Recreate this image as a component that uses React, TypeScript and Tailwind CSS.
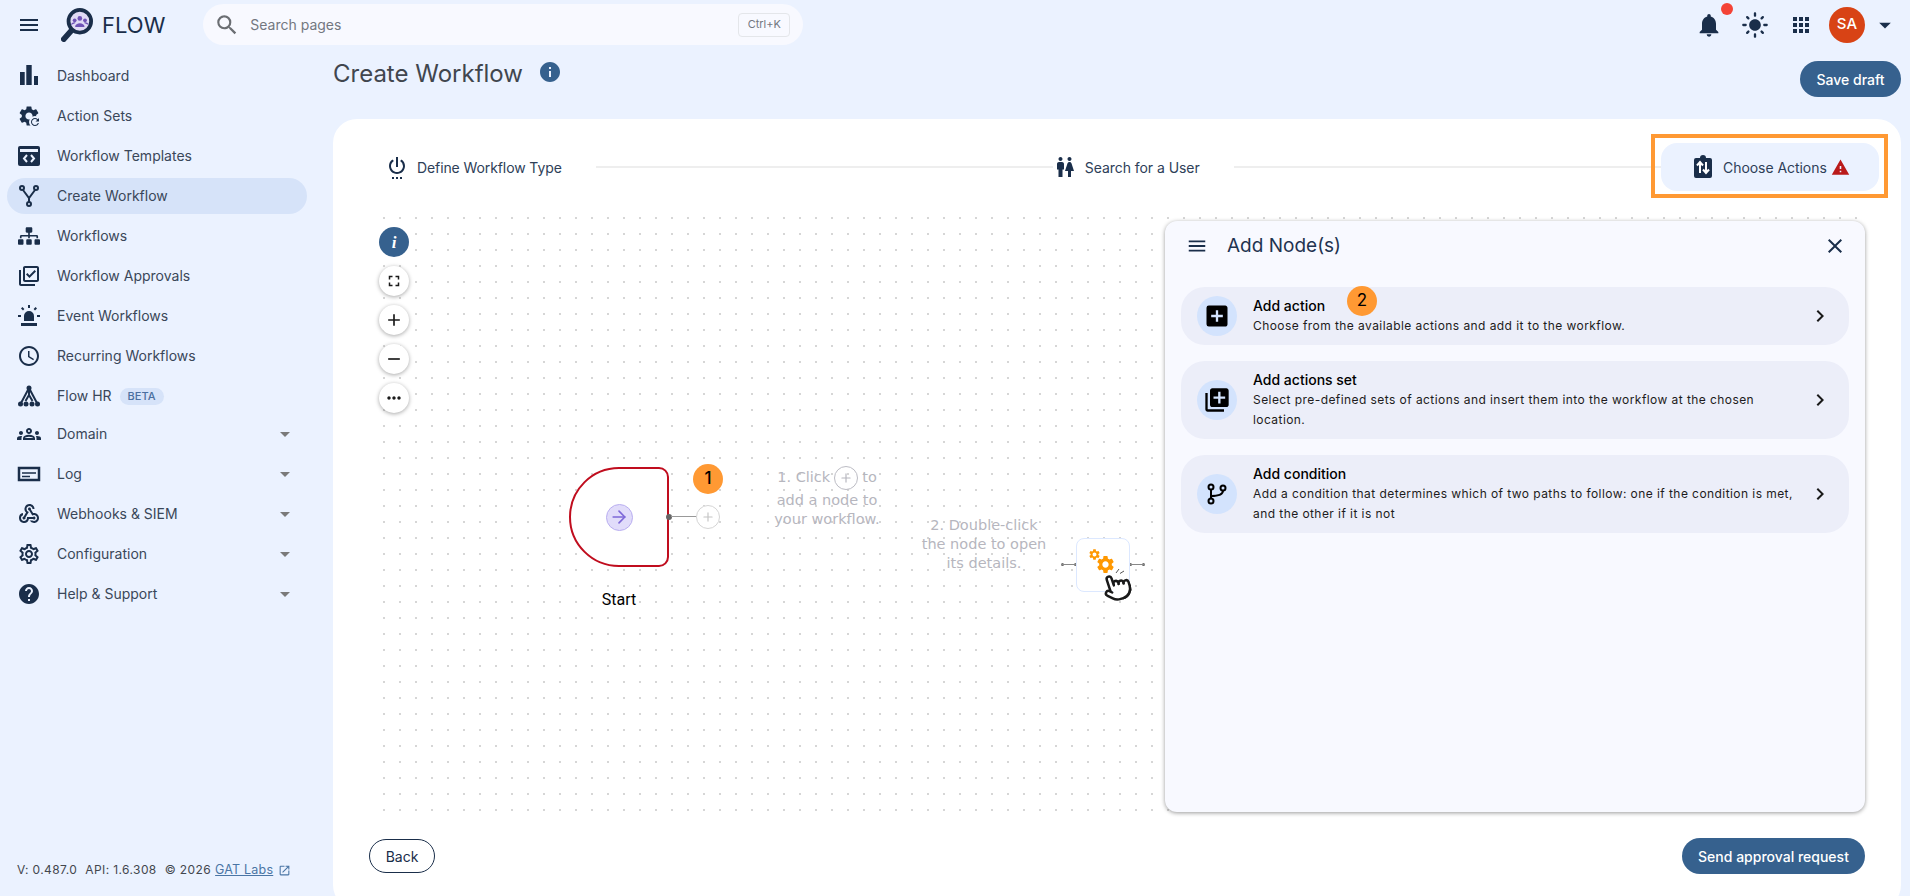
import type { ReactNode } from "react";
import { ArrowRight, Pointer, Plus } from "lucide-react";
import { FaSitemap } from "react-icons/fa";
import {
  MdAccessTime,
  MdAdd,
  MdAddBox,
  MdApps,
  MdArrowDropDown,
  MdChevronRight,
  MdClose,
  MdFullscreen,
  MdHelp,
  MdInfo,
  MdLibraryAdd,
  MdLightMode,
  MdMenu,
  MdMoreHoriz,
  MdNotifications,
  MdOpenInNew,
  MdOutlineGroups,
  MdOutlineLibraryAddCheck,
  MdOutlineSettings,
  MdOutlineWebhook,
  MdRefresh,
  MdRemove,
  MdSearch,
  MdSettings,
  MdSettingsPower,
  MdWarning,
  MdWc,
} from "react-icons/md";

function DashboardIcon() {
  return (
    <svg viewBox="0 0 24 24" className="size-6" fill="currentColor">
      <path d="M3 8h4.700v13H3zM9.300 1h5.400v20H9.300zM17 12h4v9h-4z" />
    </svg>
  );
}

function ActionSetsIcon() {
  return (
    <span className="relative block size-6">
      <MdSettings className="size-6" />
      <span className="absolute bottom-0 right-0 flex size-3 items-center justify-center rounded-full bg-[#ebf2ff]">
        <MdRefresh className="size-3" />
      </span>
    </span>
  );
}

function TemplatesIcon() {
  return (
    <svg viewBox="0 0 24 24" className="size-6">
      <rect x="1" y="2" width="22" height="20" rx="2" fill="currentColor" />
      <rect x="3" y="5" width="18" height="3" fill="#ebf2ff" />
      <path d="M10 11l-3 3.500 3 3.500M14 11l3 3.500-3 3.500" fill="none" stroke="#ebf2ff" strokeWidth="2" />
    </svg>
  );
}

function ForkIcon() {
  return (
    <svg viewBox="0 0 24 24" className="size-6" fill="none" stroke="currentColor" strokeWidth="2">
      <circle cx="5" cy="4" r="2" />
      <circle cx="19" cy="4" r="2" />
      <circle cx="12" cy="20" r="2" />
      <path d="M6 6l6 8 6-8M12 14v4" />
    </svg>
  );
}

function SirenIcon() {
  return (
    <svg viewBox="0 0 24 24" className="size-6" fill="currentColor">
      <path d="M7 17v-5a5 5 0 0 1 10 0v5zM4 19h16v3H4zM11 1h2v3h-2zM1 11h3v2H1zM20 11h3v2h-3zM4 4.500l1.400-1.400 2 2L6 6.500zM18.600 3.100L20 4.500l-2 2-1.400-1.400z" />
    </svg>
  );
}

function FlowHrIcon() {
  return (
    <svg viewBox="0 0 24 24" className="size-6" fill="none" stroke="currentColor" strokeWidth="2">
      <path d="M12 4L3.500 20M12 4l8.500 16M12 4v7M12 11l-3.500 6M12 11l3.500 6" />
      <g fill="currentColor" stroke="none">
        <circle cx="12" cy="4" r="2.500" />
        <circle cx="3.500" cy="20" r="2.500" />
        <circle cx="9" cy="20" r="2.500" />
        <circle cx="15" cy="20" r="2.500" />
        <circle cx="20.500" cy="20" r="2.500" />
      </g>
    </svg>
  );
}

function LogIcon() {
  return (
    <svg viewBox="0 0 24 24" className="size-6" fill="none" stroke="currentColor">
      <rect x="2" y="6" width="20" height="12" strokeWidth="2.500" />
      <path d="M5 11h14M5 14.500h8" strokeWidth="1.500" />
    </svg>
  );
}

function ChooseActionsIcon() {
  return (
    <svg viewBox="0 0 24 24" className="size-6">
      <path d="M5 3h4a3 3 0 0 1 6 0h4a2 2 0 0 1 2 2v16a2 2 0 0 1-2 2H5a2 2 0 0 1-2-2V5a2 2 0 0 1 2-2z" fill="currentColor" />
      <path d="M9 18V8M6 10.500L9 7l3 3.500M15 7v10M12 14.500l3 3.500 3-3.500" fill="none" stroke="#fff" strokeWidth="2" />
    </svg>
  );
}

function BranchIcon() {
  return (
    <svg viewBox="0 0 24 24" className="size-6" fill="none" stroke="#000" strokeWidth="2">
      <circle cx="6" cy="5" r="2.500" />
      <circle cx="6" cy="19" r="2.500" />
      <circle cx="18" cy="6" r="2.500" />
      <path d="M6 7.500v9M6 14c7 0 12-1 12-5.500" />
    </svg>
  );
}

function Logo() {
  return (
    <svg viewBox="0 0 34 36" className="h-[34px] w-[32px]">
      <circle cx="20" cy="14" r="12" fill="#e0daf5" stroke="#1a2e4a" strokeWidth="4" />
      <path d="M11 24L3 33" stroke="#1a2e4a" strokeWidth="6" strokeLinecap="round" />
      <circle cx="20" cy="11" r="2.500" fill="#6f52b5" />
      <circle cx="14.500" cy="13" r="2" fill="#6f52b5" />
      <circle cx="25.500" cy="13" r="2" fill="#6f52b5" />
      <path d="M15 20c0-5 10-5 10 0zM10.500 18c0-3 5-4 5-2zM29.500 18c0-3-5-4-5-2z" fill="#6f52b5" />
    </svg>
  );
}

type NavItem = { label: string; icon: ReactNode; active?: boolean; beta?: boolean; caret?: boolean };

const mainNav: NavItem[] = [
  { label: "Dashboard", icon: <DashboardIcon /> },
  { label: "Action Sets", icon: <ActionSetsIcon /> },
  { label: "Workflow Templates", icon: <TemplatesIcon /> },
  { label: "Create Workflow", icon: <ForkIcon />, active: true },
  { label: "Workflows", icon: <FaSitemap className="size-[22px]" /> },
  { label: "Workflow Approvals", icon: <MdOutlineLibraryAddCheck className="size-6" /> },
  { label: "Event Workflows", icon: <SirenIcon /> },
  { label: "Recurring Workflows", icon: <MdAccessTime className="size-[26px]" /> },
  { label: "Flow HR", icon: <FlowHrIcon />, beta: true },
];

const groupNav: NavItem[] = [
  { label: "Domain", icon: <MdOutlineGroups className="size-7" />, caret: true },
  { label: "Log", icon: <LogIcon />, caret: true },
  { label: "Webhooks & SIEM", icon: <MdOutlineWebhook className="size-6" />, caret: true },
  { label: "Configuration", icon: <MdOutlineSettings className="size-[26px]" />, caret: true },
  { label: "Help & Support", icon: <MdHelp className="size-[26px]" />, caret: true },
];

function NavRow({ item }: { item: NavItem }) {
  return (
    <div
      className={`mx-[7px] flex h-9 w-[300px] items-center rounded-[18px] pl-[10px] text-[14px] leading-5 text-[#3a4759] ${
        item.active ? "bg-[#d6e3f9]" : ""
      }`}
    >
      <span className="flex w-6 flex-none items-center justify-center text-[#1a2e4a]">{item.icon}</span>
      <span className="ml-[16px]">{item.label}</span>
      {item.beta && (
        <span className="ml-2 rounded-full bg-[#d6e3f9] px-2 text-[11px] font-medium leading-[17px] text-[#4a6fa0]">
          BETA
        </span>
      )}
      {item.caret && <MdArrowDropDown className="ml-auto mr-[10px] size-6 text-[#7a7a7a]" />}
    </div>
  );
}

function Sidebar() {
  return (
    <aside className="flex w-[333px] flex-none flex-col">
      <div className="mt-[9px] flex flex-col gap-1">
        {mainNav.map((item) => (
          <NavRow key={item.label} item={item} />
        ))}
      </div>
      <div className="mt-[2px] flex flex-col gap-1">
        {groupNav.map((item) => (
          <NavRow key={item.label} item={item} />
        ))}
      </div>
      <div className="mt-auto mb-[18px] flex items-center pl-[17px] text-[12px] leading-4 tracking-[0.4px] text-[#43474e]">
        <span>V: 0.487.0</span>
        <span className="ml-[8px]">API: 1.6.308</span>
        <span className="ml-[8px]">© 2026</span>
        <span className="ml-1 text-[12.500px] tracking-[0.2px] text-[#4a75a5] underline">GAT Labs</span>
        <MdOpenInNew className="ml-[5px] size-[13px] text-[#4a75a5]" />
      </div>
    </aside>
  );
}

function TopBar() {
  return (
    <header className="flex h-[49px] flex-none items-center">
      <MdMenu className="ml-[17px] size-6 text-[#1a2e4a]" />
      <span className="ml-[20px]">
        <Logo />
      </span>
      <span className="ml-[9px] text-[22px] leading-none text-[#1a2e4a]">FLOW</span>
      <div className="ml-[38px] flex h-[41px] w-[600px] items-center rounded-[21px] bg-[#f8f9ff]">
        <MdSearch className="ml-[11px] size-[26px] text-[#6b6e73]" />
        <span className="ml-[10px] text-[14px] text-[#73777f]">Search pages</span>
        <span className="ml-auto mr-[13px] flex h-6 w-[52px] items-center justify-center rounded-[4px] border border-[#e4e6ea] text-[11px] text-[#73777f]">
          Ctrl+K
        </span>
      </div>
      <div className="relative ml-auto flex items-center">
        <MdNotifications className="size-7 text-[#1a2e4a]" />
        <span className="absolute left-[26px] top-[-4px] size-3 rounded-full bg-[#f44336]" />
        <MdLightMode className="ml-[18px] size-7 text-[#1a2e4a]" />
        <MdApps className="ml-[20px] size-6 text-[#1a2e4a]" />
        <span className="ml-[16px] flex size-9 items-center justify-center rounded-full bg-[#d84315] text-[15px] font-medium text-white">
          SA
        </span>
        <MdArrowDropDown className="ml-[6px] mr-[11px] size-7 text-[#1a2e4a]" />
      </div>
    </header>
  );
}

function Stepper() {
  return (
    <div className="relative flex items-center pl-[52px] pr-[22px] pt-[24px]">
      <div className="flex items-center gap-2 text-[14px] tracking-[-0.1px] text-[#2e4058]">
        <MdSettingsPower className="size-6 text-[#1a2e4a]" />
        <span>Define Workflow Type</span>
      </div>
      <div className="ml-[34px] h-[2px] w-[457px] bg-[#eeeeee]" />
      <div className="flex items-center gap-2 text-[14px] tracking-[-0.05px] text-[#2e4058]">
        <MdWc className="size-6 text-[#1a2e4a]" />
        <span>Search for a User</span>
      </div>
      <div className="ml-[34px] h-[2px] flex-1 bg-[#eeeeee]" />
      <div className="flex h-12 w-[218px] items-center rounded-2xl bg-[#ebf2ff] pl-[30px] text-[14px] tracking-[-0.05px] text-[#2e4058]">
        <span className="text-[#1a2e4a]">
          <ChooseActionsIcon />
        </span>
        <span className="ml-2">Choose Actions</span>
        <MdWarning className="ml-[4px] size-[19px] text-[#ba1a1a]" />
      </div>
      <div className="absolute right-[13px] top-[15px] h-[64px] w-[237px] border-4 border-[#ff9933]" />
    </div>
  );
}

function ZoomButton({ children, primary }: { children: ReactNode; primary?: boolean }) {
  return (
    <div
      className={`flex size-[30px] items-center justify-center rounded-full ${
        primary ? "bg-[#36618e] text-white" : "bg-white text-[#1a1a1a] shadow-[0_1px_4px_rgba(0,0,0,0.35)]"
      }`}
    >
      {children}
    </div>
  );
}

function NumberBadge({ n, className }: { n: number; className: string }) {
  return (
    <span className={`flex size-[30px] items-center justify-center rounded-full bg-[#ff9933] text-[17px] text-black ${className}`}>
      {n}
    </span>
  );
}

function Hint({ className, children }: { className: string; children: ReactNode }) {
  return (
    <div className={`absolute text-center font-['DejaVu_Sans',sans-serif] text-[14.500px] leading-[19px] text-[#b6b6be] ${className}`}>
      {children}
    </div>
  );
}

function Stub({ className }: { className: string }) {
  return (
    <span className={`absolute flex h-[3px] w-[16px] items-center justify-between ${className}`}>
      <span className="size-[3px] rounded-full bg-[#666]" />
      <span className="absolute left-0 right-0 top-px h-px bg-[#888]" />
      <span className="size-[3px] rounded-full bg-[#666]" />
    </span>
  );
}

type NodeOption = { title: string; lines: string[]; icon: ReactNode; height: string };

const options: NodeOption[] = [
  {
    title: "Add action",
    lines: ["Choose from the available actions and add it to the workflow."],
    icon: <MdAddBox className="size-7 text-black" />,
    height: "h-[58px]",
  },
  {
    title: "Add actions set",
    lines: ["Select pre-defined sets of actions and insert them into the workflow at the chosen", "location."],
    icon: <MdLibraryAdd className="size-7 text-black" />,
    height: "h-[78px]",
  },
  {
    title: "Add condition",
    lines: ["Add a condition that determines which of two paths to follow: one if the condition is met,", "and the other if it is not"],
    icon: <BranchIcon />,
    height: "h-[78px]",
  },
];

function AddNodePanel() {
  return (
    <div className="absolute bottom-0 right-0 top-[11px] w-[700px] rounded-xl bg-[#f8f9ff] shadow-[0_1px_4px_rgba(0,0,0,0.4)]">
      <div className="flex h-[50px] items-center pl-[21px] pr-[18px]">
        <MdMenu className="size-[22px] text-[#1a2e4a]" />
        <span className="ml-[19px] text-[19px] text-[#1f3350]">Add Node(s)</span>
        <MdClose className="ml-auto size-6 text-[#1a2e4a]" />
      </div>
      <div className="mt-4 flex flex-col gap-4 px-4">
        {options.map((o) => (
          <div key={o.title} className={`flex items-center rounded-3xl bg-[#eceef9] pl-4 pr-[17px] ${o.height}`}>
            <span className="flex size-10 flex-none items-center justify-center rounded-full bg-[#d3e3fd]">{o.icon}</span>
            <div className="ml-4 flex-1 text-black">
              <div className="text-[14px] font-medium leading-5">{o.title}</div>
              {o.lines.map((l) => (
                <div key={l} className="text-[12px] leading-5 tracking-[0.43px] text-[#1d1b20]">
                  {l}
                </div>
              ))}
            </div>
            <MdChevronRight className="size-6 flex-none text-[#1a1a1a]" />
          </div>
        ))}
      </div>
      <NumberBadge n={2} className="absolute left-[182px] top-[65px]" />
    </div>
  );
}

function Canvas() {
  return (
    <div className="relative ml-[43px] mr-[36px] mt-[19px] h-[602px] bg-[radial-gradient(circle,#d6d6d6_0.8px,transparent_0.8px)] bg-[length:16px_16px]">
      {/* zoom controls */}
      <div className="absolute left-[3px] top-[17px] flex flex-col gap-[9px]">
        <ZoomButton primary>
          <span className="font-['Liberation_Serif',serif] text-[17px] font-bold italic leading-none">i</span>
        </ZoomButton>
        <ZoomButton>
          <MdFullscreen className="size-[18px]" />
        </ZoomButton>
        <ZoomButton>
          <MdAdd className="size-[20px]" />
        </ZoomButton>
        <ZoomButton>
          <MdRemove className="size-[20px]" />
        </ZoomButton>
        <ZoomButton>
          <MdMoreHoriz className="size-[20px]" />
        </ZoomButton>
      </div>

      {/* start node */}
      <div className="absolute left-[193px] top-[257px] flex size-[100px] items-center justify-center rounded-l-[50px] rounded-r-[10px] border-2 border-[#c00d1e] bg-white">
        <span className="flex size-[27px] items-center justify-center rounded-full border border-[#b9aef0] bg-[#e1dcfa] text-[#7e68d8]">
          <ArrowRight className="size-5" />
        </span>
      </div>
      <span className="absolute left-[191px] top-[380px] w-[104px] text-center font-['Roboto',sans-serif] text-[16px] leading-5 text-black">
        Start
      </span>
      <span className="absolute left-[290px] top-[304px] size-[6px] rounded-full bg-[#666]" />
      <span className="absolute left-[295px] top-[306px] h-px w-[26px] bg-[#999]" />
      <span className="absolute left-[320px] top-[295px] flex size-[24px] items-center justify-center rounded-full border border-[#d5d5d5] bg-white text-[#c4c4c4]">
        <Plus className="size-[14px]" />
      </span>
      <NumberBadge n={1} className="absolute left-[317px] top-[254px] font-medium" />

      {/* hints */}
      <Hint className="left-[371px] top-[255px] w-[160px]">
        <div className="flex h-[25px] items-center justify-center">
          1. Click
          <span className="mx-1 flex size-6 items-center justify-center rounded-full border border-[#bcbcc4]">
            <Plus className="size-[14px]" />
          </span>
          to
        </div>
        <div className="mt-[1px]">add a node to</div>
        <div>your workflow.</div>
      </Hint>
      <Hint className="left-[528px] top-[306px] w-[160px]">
        <div>2. Double-click</div>
        <div>the node to open</div>
        <div>its details.</div>
      </Hint>

      {/* sample node */}
      <Stub className="left-[685px] top-[353px]" />
      <Stub className="left-[753px] top-[353px]" />
      <div className="absolute left-[700px] top-[328px] size-[54px] rounded-lg border border-[#dce8ff] bg-white">
        <MdSettings className="absolute left-[11px] top-[9px] size-[13px] text-[#ff9800]" />
        <MdSettings className="absolute left-[18px] top-[15px] size-[21px] text-[#ff9800]" />
        <svg viewBox="0 0 10 6" className="absolute left-[38px] top-[29px] h-[6px] w-[10px]" fill="none" stroke="#555" strokeWidth="1">
          <path d="M1 5l3-4M5 5.500l4-2.500" />
        </svg>
        <Pointer className="absolute left-[25px] top-[33px] size-[30px] -rotate-[18deg] fill-white text-[#1a1a1a]" />
      </div>

      <AddNodePanel />
    </div>
  );
}

export default function App() {
  return (
    <div className="flex h-[896px] w-[1910px] flex-col overflow-hidden bg-[#ebf2ff] font-['Inter',sans-serif]">
      <TopBar />
      <div className="flex min-h-0 flex-1">
        <Sidebar />
        <main className="flex w-[1568px] flex-none flex-col">
          <div className="flex h-[70px] flex-none items-start">
            <h1 className="mt-[10px] text-[24px] leading-[30px] text-[#41464e]">Create Workflow</h1>
            <MdInfo className="ml-[15px] mt-[11px] size-[24px] text-[#36618e]" />
            <button className="ml-auto mt-[12px] h-9 w-[101px] rounded-[18px] bg-[#36618e] text-[14px] font-medium text-white">
              Save draft
            </button>
          </div>
          <section className="h-[790px] flex-none rounded-[24px] bg-white">
            <Stepper />
            <Canvas />
            <div className="mt-[26px] flex items-center justify-between pl-[36px] pr-[36px]">
              <button className="h-[34px] w-[66px] rounded-[17px] border-[1.500px] border-[#1a2e4a] text-[14px] text-[#1a2e4a]">Back</button>
              <button className="h-9 w-[183px] rounded-[18px] bg-[#36618e] text-[14px] font-medium text-white">
                Send approval request
              </button>
            </div>
          </section>
        </main>
      </div>
    </div>
  );
}
